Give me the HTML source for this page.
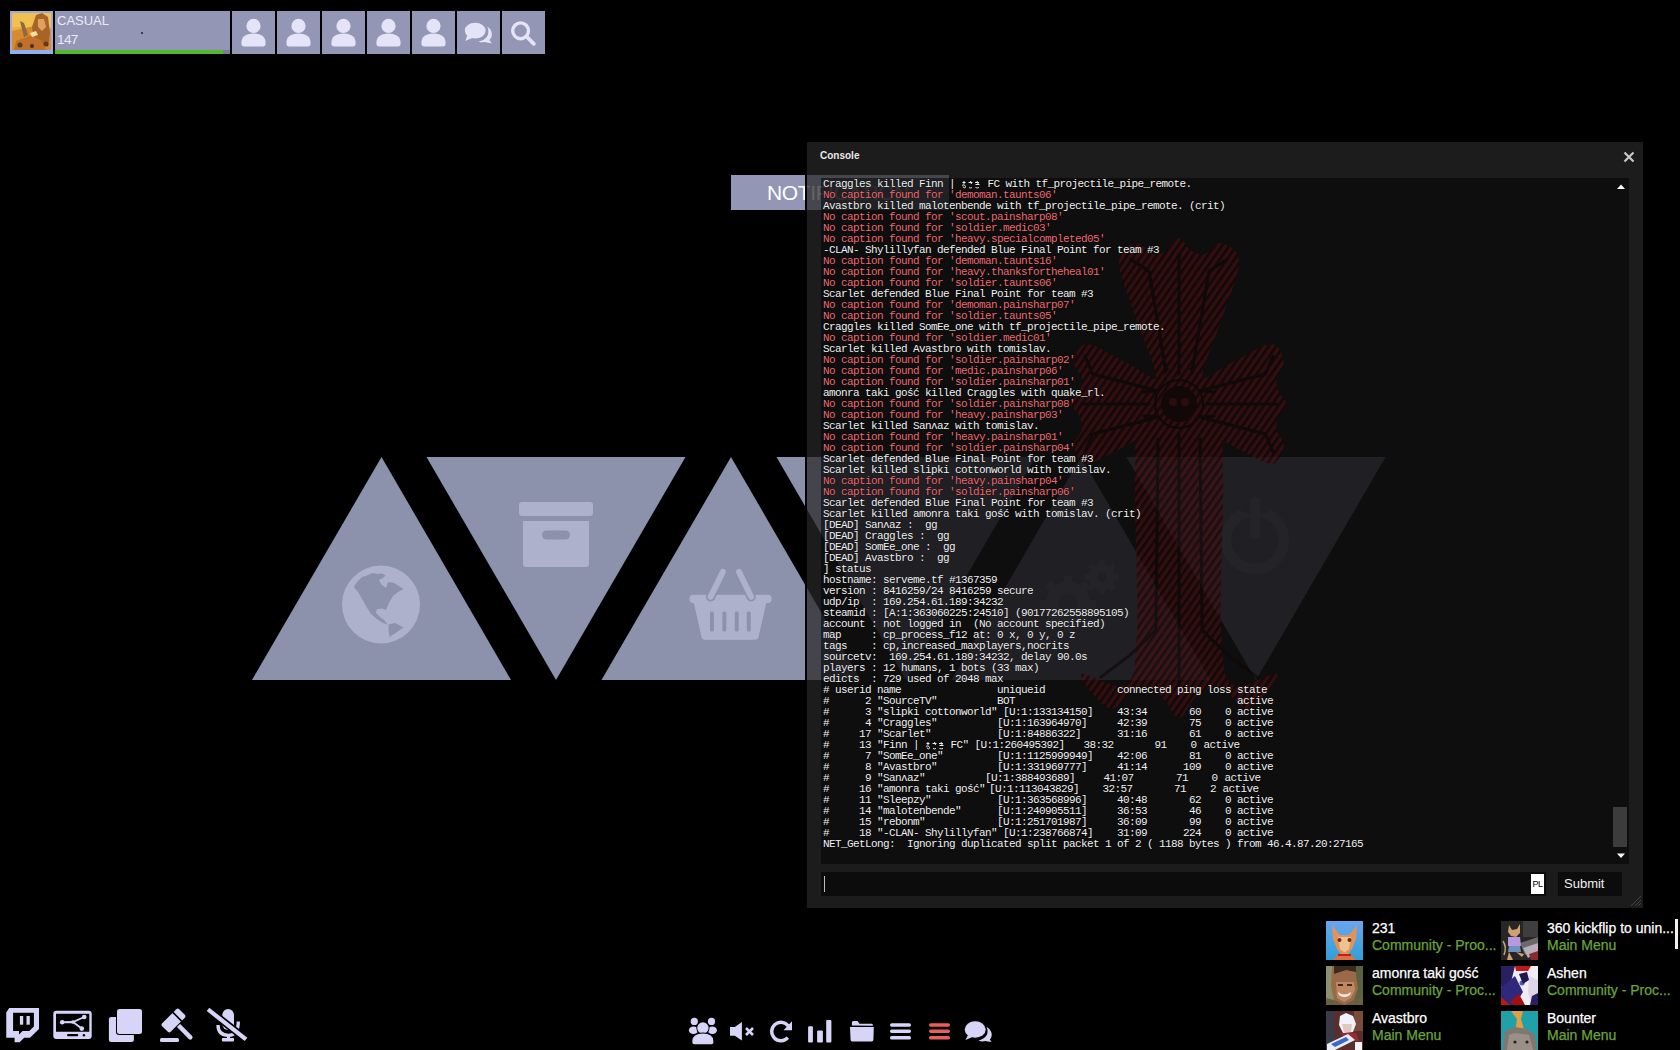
<!DOCTYPE html>
<html><head><meta charset="utf-8">
<style>
*{margin:0;padding:0;box-sizing:border-box}
html,body{width:1680px;height:1050px;overflow:hidden;background:#000;font-family:"Liberation Sans",sans-serif}
.abs{position:absolute}
.tb{position:absolute;top:11px;width:43px;height:43px;background:#9396b4}
.tb svg{position:absolute;left:0;top:0}
#console{position:absolute;left:805px;top:140px;width:840px;height:770px;border:2px solid #000;background:rgba(39,39,39,0.72)}
#txt{position:absolute;left:14px;top:36px;width:808px;height:686px;background:rgba(3,3,3,0.55);overflow:hidden}
#lines{position:absolute;left:2px;top:1px;font-family:"Liberation Mono",monospace;font-size:11px;letter-spacing:-0.6px;line-height:11px;color:#f0f0f0;text-shadow:0 0 1px #000}
#lines div{height:11px;position:relative;white-space:pre}
#lines .r{color:#ee6a72}
#lines .a{position:absolute;top:0}
.jp{display:inline-block;width:20px;height:11px;vertical-align:top}
.jp svg{display:block}
.fn{font-size:14px;line-height:17px;color:#fff;white-space:nowrap;-webkit-text-stroke:0.25px #fff}
.fs{font-size:14px;line-height:17px;color:#6aa43a;white-space:nowrap;-webkit-text-stroke:0.25px #6aa43a}
.av1{background:linear-gradient(180deg,#5aa8e0,#3d8ad0)}
.av2{background:linear-gradient(135deg,#3a3a3a,#8a7a70 50%,#b0a0c0)}
.av3{background:linear-gradient(135deg,#6a5a40,#c09070 50%,#4a4a3a)}
.av4{background:linear-gradient(135deg,#e8e8f0,#2a2a6a 40%,#c02020 80%)}
.av5{background:linear-gradient(135deg,#5a3a3a,#d0d0e0 50%,#4060a0)}
.av6{background:linear-gradient(180deg,#20a0a0,#706860 60%,#8a8078)}
</style></head><body>
<!-- top bar -->
<div class="abs" style="left:10px;top:11px;width:43px;height:43px;background:#a4a8d4"></div>
<div class="abs" style="left:10px;top:50px;width:43px;height:4px;background:#8cb0f0"></div>
<svg class="abs" style="left:12px;top:13px" width="39" height="37"><rect width="39" height="37" fill="#e8b040"/><rect y="0" width="39" height="14" fill="#f0c050"/><path d="M0 18L14 15L26 12L39 16V37H0Z" fill="#d88a30"/><path d="M24 2L30 0L36 4L38 20L36 34L28 30L22 26L20 14Z" fill="#a86428"/><path d="M26 6L32 6L34 14L30 18L26 14Z" fill="#e0a060"/><path d="M4 28L20 22L30 28L34 37H2Z" fill="#c07028"/><path d="M8 8L12 10L16 22L12 24Z" fill="#8a6a40"/><circle cx="8" cy="32" r="2.5" fill="#5a3a20"/><circle cx="20" cy="33" r="2" fill="#4a2a18"/><circle cx="34" cy="31" r="2.5" fill="#5a3a20"/><path d="M18 20L24 18L26 22L20 24Z" fill="#f8e0a0"/></svg>
<div class="abs" style="left:55px;top:11px;width:175px;height:43px;background:#9396b4"></div>
<div class="abs" style="left:55px;top:50px;width:168px;height:4px;background:#52b82e"></div>
<div class="abs" style="left:223px;top:50px;width:7px;height:4px;background:#7a7d98"></div>
<div class="abs" style="left:57px;top:12px;font-size:13px;line-height:18px;color:#eceaf8">CASUAL</div>
<div class="abs" style="left:57px;top:31px;font-size:13.5px;line-height:18px;color:#eceaf8;letter-spacing:-0.6px">147</div>
<div class="abs" style="left:141px;top:32px;width:2px;height:2px;background:#3a3a50"></div>
<div class="tb" style="left:232px"><svg width="43" height="43"><circle cx="21.5" cy="14.9" r="7.1" fill="#e5e3f7"/><path d="M9.4 32C9.4 26 13.5 22.6 21.5 22.6S33.6 26 33.6 32V33Q33.6 35.4 31.2 35.4H11.8Q9.4 35.4 9.4 33Z" fill="#e5e3f7"/></svg></div>
<div class="tb" style="left:277px"><svg width="43" height="43"><circle cx="21.5" cy="14.9" r="7.1" fill="#e5e3f7"/><path d="M9.4 32C9.4 26 13.5 22.6 21.5 22.6S33.6 26 33.6 32V33Q33.6 35.4 31.2 35.4H11.8Q9.4 35.4 9.4 33Z" fill="#e5e3f7"/></svg></div>
<div class="tb" style="left:322px"><svg width="43" height="43"><circle cx="21.5" cy="14.9" r="7.1" fill="#e5e3f7"/><path d="M9.4 32C9.4 26 13.5 22.6 21.5 22.6S33.6 26 33.6 32V33Q33.6 35.4 31.2 35.4H11.8Q9.4 35.4 9.4 33Z" fill="#e5e3f7"/></svg></div>
<div class="tb" style="left:367px"><svg width="43" height="43"><circle cx="21.5" cy="14.9" r="7.1" fill="#e5e3f7"/><path d="M9.4 32C9.4 26 13.5 22.6 21.5 22.6S33.6 26 33.6 32V33Q33.6 35.4 31.2 35.4H11.8Q9.4 35.4 9.4 33Z" fill="#e5e3f7"/></svg></div>
<div class="tb" style="left:412px"><svg width="43" height="43"><circle cx="21.5" cy="14.9" r="7.1" fill="#e5e3f7"/><path d="M9.4 32C9.4 26 13.5 22.6 21.5 22.6S33.6 26 33.6 32V33Q33.6 35.4 31.2 35.4H11.8Q9.4 35.4 9.4 33Z" fill="#e5e3f7"/></svg></div>
<div class="tb" style="left:457px"><svg width="43" height="43"><ellipse cx="18.2" cy="19.6" rx="10.4" ry="7.9" fill="#e5e3f7"/><path d="M10.5 23.5L8.3 30L16.5 26.5Z" fill="#e5e3f7"/><path d="M30.2 15.5C33.8 17.8 35.6 21.5 34.6 25.2C34.2 26.8 33.3 28 32.4 29L34.8 32.6L27.5 31C25.5 31.6 23.2 31.4 21.5 30.4C26.5 29.8 30.6 26.5 31.3 22.2C31.6 19.8 31.2 17.5 30.2 15.5Z" fill="#e5e3f7"/></svg></div>
<div class="tb" style="left:502px"><svg width="43" height="43"><circle cx="18.6" cy="19.8" r="7.9" fill="none" stroke="#e5e3f7" stroke-width="3.4"/><path d="M24.5 25.5L31.8 32.8" stroke="#e5e3f7" stroke-width="3.8" stroke-linecap="round"/></svg></div>

<!-- triangles -->
<svg class="abs" style="left:0;top:0" width="1680" height="1050">
<g fill="#8c91ac">
<polygon points="381.5,457 252,680 511,680"/>
<polygon points="426.5,457 685.5,457 556,680"/>
<polygon points="731,457 601.5,680 860.5,680"/>
<polygon points="776.5,457 1035.5,457 906,680"/>
<polygon points="1081,457 951.5,680 1210.5,680"/>
<polygon points="1126.5,457 1385.5,457 1256,680"/>
</g>
<g fill="#aeb1cc">
<circle cx="381" cy="604.5" r="39"/>
<rect x="519" y="502" width="74" height="14" rx="3"/>
<path d="M523 521H589V564Q589 567 586 567H526Q523 567 523 564Z"/>
<rect x="689.4" y="594.7" width="82.3" height="8.3" rx="4"/>
<path d="M693.7 602H766.5L758.5 637Q758 639.7 755 639.7H705Q702 639.7 701.5 637Z"/>
</g>
<g fill="#8c91ac">
<path d="M353.8 587L357 582L362 577L367 575.5L370 574L374 573L377 574L382 573.5L385.5 575.5L383 578L379 580L381 584L386 588L388 582L394 583L399 586L403.5 589L398 592L393 596L390 601L387.5 606L386 610L382 608.5L377 609L376 613L380 617L384 620L387.5 624.5L383 623L377 619L371 614L366 606L361.5 598L358 592Z"/>
<path d="M388.5 624.5L395 623L403.5 627.5L397 632L389.5 637L388.5 630Z"/>
<rect x="542" y="530.5" width="28" height="9" rx="4.5"/>
<rect x="710" y="611.4" width="3.9" height="20.1" rx="1.5"/>
<rect x="722.4" y="611.4" width="3.9" height="20.1" rx="1.5"/>
<rect x="734.8" y="611.4" width="3.9" height="20.1" rx="1.5"/>
<rect x="746.8" y="611.4" width="3.9" height="20.1" rx="1.5"/>
</g>
<path d="M710.6 596.8L722.8 572M751.1 596.8L739.1 572" stroke="#8c91ac" stroke-width="9.5" stroke-linecap="round"/><path d="M710.6 596.8L722.8 572M751.1 596.8L739.1 572" stroke="#aeb1cc" stroke-width="6" stroke-linecap="round"/>
<g fill="none" stroke="#aeb1cc">
<circle cx="1255" cy="540" r="29" stroke-width="10"/>
</g>
<path d="M1243 505A34 34 0 0 0 1267 505" stroke="#8c91ac" stroke-width="14" fill="none"/>
<rect x="1250" y="497" width="10" height="42" rx="5" fill="#aeb1cc"/>
<g><circle cx="1068" cy="604" r="22" fill="#aeb1cc"/><rect x="1064.0" y="576" width="8" height="7" fill="#aeb1cc" transform="rotate(0.0 1068 604)"/><rect x="1064.0" y="576" width="8" height="7" fill="#aeb1cc" transform="rotate(45.0 1068 604)"/><rect x="1064.0" y="576" width="8" height="7" fill="#aeb1cc" transform="rotate(90.0 1068 604)"/><rect x="1064.0" y="576" width="8" height="7" fill="#aeb1cc" transform="rotate(135.0 1068 604)"/><rect x="1064.0" y="576" width="8" height="7" fill="#aeb1cc" transform="rotate(180.0 1068 604)"/><rect x="1064.0" y="576" width="8" height="7" fill="#aeb1cc" transform="rotate(225.0 1068 604)"/><rect x="1064.0" y="576" width="8" height="7" fill="#aeb1cc" transform="rotate(270.0 1068 604)"/><rect x="1064.0" y="576" width="8" height="7" fill="#aeb1cc" transform="rotate(315.0 1068 604)"/><circle cx="1068" cy="604" r="10" fill="#8c91ac"/><circle cx="1102" cy="577" r="13" fill="#aeb1cc"/><rect x="1099.5" y="560" width="5" height="5" fill="#aeb1cc" transform="rotate(0.0 1102 577)"/><rect x="1099.5" y="560" width="5" height="5" fill="#aeb1cc" transform="rotate(45.0 1102 577)"/><rect x="1099.5" y="560" width="5" height="5" fill="#aeb1cc" transform="rotate(90.0 1102 577)"/><rect x="1099.5" y="560" width="5" height="5" fill="#aeb1cc" transform="rotate(135.0 1102 577)"/><rect x="1099.5" y="560" width="5" height="5" fill="#aeb1cc" transform="rotate(180.0 1102 577)"/><rect x="1099.5" y="560" width="5" height="5" fill="#aeb1cc" transform="rotate(225.0 1102 577)"/><rect x="1099.5" y="560" width="5" height="5" fill="#aeb1cc" transform="rotate(270.0 1102 577)"/><rect x="1099.5" y="560" width="5" height="5" fill="#aeb1cc" transform="rotate(315.0 1102 577)"/><circle cx="1102" cy="577" r="5" fill="#8c91ac"/></g>

</svg>
<!-- notification -->
<div class="abs" style="left:731px;top:175px;width:218px;height:35px;background:#9396b4;color:#fff;font-size:21px;line-height:35px;letter-spacing:-0.4px;text-align:center;padding-right:4px">NOTIFICATION</div>

<!-- console -->
<div id="console">
 <div class="abs" style="left:13px;top:8px;font-size:10px;font-weight:bold;color:#e8e8e8">Console</div>
 <svg class="abs" style="left:816px;top:9px" width="12" height="12"><path d="M1.5 1.5L10.5 10.5M10.5 1.5L1.5 10.5" stroke="#c8c8c8" stroke-width="2.2"/></svg>
 <div class="abs" style="left:14px;top:730px;width:725px;height:24px;background:rgba(0,0,0,0.55)"></div>
 <div class="abs" style="left:17px;top:734px;width:1px;height:16px;background:#bdbdbd"></div>
 <div class="abs" style="left:724px;top:732px;width:13px;height:20px;background:#fff;color:#000;font-size:9px;line-height:20px;font-family:'Liberation Sans',sans-serif;letter-spacing:-0.5px;text-align:center">PL</div>
 <div class="abs" style="left:751px;top:730px;width:64px;height:24px;background:rgba(0,0,0,0.55);color:#eee;font-size:13px;line-height:24px;padding-left:6px">Submit</div>
 <svg class="abs" style="left:822px;top:752px" width="14" height="14"><path d="M12 2L2 12M12 6L6 12M12 9L9 12" stroke="#444" stroke-width="1"/></svg>
 <div id="txt">
  <svg id="cross" class="abs" style="left:0;top:0;opacity:0.62" width="808" height="686"><defs><pattern id="hatch" width="6" height="6" patternUnits="userSpaceOnUse" patternTransform="rotate(35)"><rect width="6" height="6" fill="#4a0e12"/><rect width="2.6" height="6" fill="#140606"/></pattern></defs><g fill="url(#hatch)"><path d="M336.4 226.0C328.8 220.5 337.9 208.0 334.0 192.8C330.1 177.6 319.0 153.0 313.0 134.7C307.0 116.4 297.5 94.9 298.0 83.2C298.5 71.6 310.2 66.1 316.0 65.0C321.8 63.9 327.6 75.5 332.8 76.6C338.0 77.7 343.0 74.4 347.2 71.6C351.4 68.9 354.4 60.0 358.0 60.0C361.6 60.0 364.6 68.9 368.8 71.6C373.0 74.4 378.0 77.7 383.2 76.6C388.4 75.5 394.2 63.9 400.0 65.0C405.8 66.1 417.5 71.6 418.0 83.2C418.5 94.9 409.0 116.4 403.0 134.7C397.0 153.0 385.9 177.6 382.0 192.8C378.1 208.0 387.2 220.5 379.6 226.0C372.0 231.5 344.0 231.5 336.4 226.0Z"/><path d="M358.0 247.6C354.4 255.2 346.3 246.1 336.4 250.0C326.5 253.9 310.5 265.0 298.6 271.0C286.7 277.0 272.7 286.5 265.1 286.0C257.6 285.5 254.0 273.8 253.2 268.0C252.5 262.2 260.1 256.4 260.8 251.2C261.5 246.0 259.4 241.0 257.6 236.8C255.8 232.6 250.0 229.6 250.0 226.0C250.0 222.4 255.8 219.4 257.6 215.2C259.4 211.0 261.5 206.0 260.8 200.8C260.1 195.6 252.5 189.8 253.2 184.0C254.0 178.2 257.6 166.5 265.1 166.0C272.7 165.5 286.7 175.0 298.6 181.0C310.5 187.0 326.5 198.1 336.4 202.0C346.3 205.9 354.4 196.8 358.0 204.4C361.6 212.0 361.6 240.0 358.0 247.6Z"/><path d="M358.0 204.4C361.6 196.8 369.7 205.9 379.6 202.0C389.5 198.1 405.5 187.0 417.4 181.0C429.3 175.0 443.3 165.5 450.9 166.0C458.4 166.5 462.0 178.2 462.8 184.0C463.5 189.8 455.9 195.6 455.2 200.8C454.5 206.0 456.6 211.0 458.4 215.2C460.2 219.4 466.0 222.4 466.0 226.0C466.0 229.6 460.2 232.6 458.4 236.8C456.6 241.0 454.5 246.0 455.2 251.2C455.9 256.4 463.5 262.2 462.8 268.0C462.0 273.8 458.4 285.5 450.9 286.0C443.3 286.5 429.3 277.0 417.4 271.0C405.5 265.0 389.5 253.9 379.6 250.0C369.7 246.1 361.6 255.2 358.0 247.6C354.4 240.0 354.4 212.0 358.0 204.4Z"/><path d="M395.8 226.0C409.1 263.7 397.3 405.3 400.0 452.1C402.7 498.8 402.6 499.3 411.9 506.6C421.2 513.9 453.6 492.0 456.0 496.0C458.5 500.0 436.1 528.5 426.6 530.6C417.1 532.7 407.7 510.7 399.2 508.6C390.7 506.5 382.5 512.8 375.6 518.0C368.8 523.3 363.9 540.0 358.0 540.0C352.1 540.0 347.2 523.3 340.4 518.0C333.5 512.8 325.3 506.5 316.8 508.6C308.3 510.7 298.9 532.7 289.4 530.6C279.9 528.5 257.6 500.0 260.0 496.0C262.5 492.0 294.8 513.9 304.1 506.6C313.4 499.3 313.3 498.8 316.0 452.1C318.7 405.3 306.9 263.7 320.2 226.0C333.5 188.3 382.5 188.3 395.8 226.0Z"/><circle cx="358" cy="226" r="30"/></g><path d="M358.0 196.0L358.0 76.6M346.0 191.0L344.8 192.8L328.0 93.2L310.0 81.6M370.0 191.0L371.2 192.8L388.0 93.2L406.0 81.6M328.0 226.0L260.8 226.0M323.0 238.0L336.4 239.2L271.6 256.0L264.0 274.0M323.0 214.0L336.4 212.8L271.6 196.0L264.0 178.0M388.0 226.0L455.2 226.0M393.0 214.0L379.6 212.8L444.4 196.0L452.0 178.0M393.0 238.0L379.6 239.2L444.4 256.0L452.0 274.0M358.0 256.0L358.0 508.6M379.0 261.0L381.1 452.1L407.0 477.2L436.4 499.2M337.0 261.0L334.9 452.1L309.0 477.2L279.6 499.2" stroke="#100606" stroke-width="3" fill="none" stroke-linecap="round"/><circle cx="358" cy="226" r="18" fill="#160505"/><circle cx="358" cy="226" r="24" fill="none" stroke="#120404" stroke-width="2"/><circle cx="352" cy="224" r="4" fill="#3c0d10"/><circle cx="364" cy="224" r="4" fill="#3c0d10"/></svg>
  <svg class="abs" style="left:796px;top:6px" width="8" height="6"><path d="M0 5L4 0.5L8 5Z" fill="#fff"/></svg>
  <svg class="abs" style="left:796px;top:675px" width="8" height="6"><path d="M0 0.5L4 5L8 0.5Z" fill="#fff"/></svg>
  <div class="abs" style="left:792px;top:629px;width:14px;height:40px;background:#3c3c3c"></div>
  <div id="lines">
<div>Craggles killed Finn | <span class="jp"><svg width="20" height="11"><path d="M1.5 3.5h3M3 2v3M1 6.5c1-1 3-1 3.5 1s-2.5 1.5-2.5 0M7.5 3.5h4M9.5 2l1 3M8 8.5c1 .5 2 .5 3 0M14 3.5h4M14.5 5.5h4M16 2l1.5 4M14.5 8.5c1 .5 2.5.5 3.5 0" stroke="#ececec" fill="none" stroke-width="1"/></svg></span><span style="position:absolute;left:158.5px"> FC with tf_projectile_pipe_remote.</span></div>
<div class="r">No caption found for 'demoman.taunts06'</div>
<div>Avastbro killed malotenbende with tf_projectile_pipe_remote. (crit)</div>
<div class="r">No caption found for 'scout.painsharp08'</div>
<div class="r">No caption found for 'soldier.medic03'</div>
<div class="r">No caption found for 'heavy.specialcompleted05'</div>
<div>-CLAN- Shylillyfan defended Blue Final Point for team #3</div>
<div class="r">No caption found for 'demoman.taunts16'</div>
<div class="r">No caption found for 'heavy.thanksfortheheal01'</div>
<div class="r">No caption found for 'soldier.taunts06'</div>
<div>Scarlet defended Blue Final Point for team #3</div>
<div class="r">No caption found for 'demoman.painsharp07'</div>
<div class="r">No caption found for 'soldier.taunts05'</div>
<div>Craggles killed SomEe_one with tf_projectile_pipe_remote.</div>
<div class="r">No caption found for 'soldier.medic01'</div>
<div>Scarlet killed Avastbro with tomislav.</div>
<div class="r">No caption found for 'soldier.painsharp02'</div>
<div class="r">No caption found for 'medic.painsharp06'</div>
<div class="r">No caption found for 'soldier.painsharp01'</div>
<div>amonra taki gość killed Craggles with quake_rl.</div>
<div class="r">No caption found for 'soldier.painsharp08'</div>
<div class="r">No caption found for 'heavy.painsharp03'</div>
<div>Scarlet killed Sanʌaz with tomislav.</div>
<div class="r">No caption found for 'heavy.painsharp01'</div>
<div class="r">No caption found for 'soldier.painsharp04'</div>
<div>Scarlet defended Blue Final Point for team #3</div>
<div>Scarlet killed slipki cottonworld with tomislav.</div>
<div class="r">No caption found for 'heavy.painsharp04'</div>
<div class="r">No caption found for 'soldier.painsharp06'</div>
<div>Scarlet defended Blue Final Point for team #3</div>
<div>Scarlet killed amonra taki gość with tomislav. (crit)</div>
<div>[DEAD] Sanʌaz :  gg</div>
<div>[DEAD] Craggles :  gg</div>
<div>[DEAD] SomEe_one :  gg</div>
<div>[DEAD] Avastbro :  gg</div>
<div>] status</div>
<div>hostname: serveme.tf #1367359</div>
<div>version : 8416259/24 8416259 secure</div>
<div>udp/ip  : 169.254.61.189:34232</div>
<div>steamid : [A:1:363060225:24510] (90177262558895105)</div>
<div>account : not logged in  (No account specified)</div>
<div>map     : cp_process_f12 at: 0 x, 0 y, 0 z</div>
<div>tags    : cp,increased_maxplayers,nocrits</div>
<div>sourcetv:  169.254.61.189:34232, delay 90.0s</div>
<div>players : 12 humans, 1 bots (33 max)</div>
<div>edicts  : 729 used of 2048 max</div>
<div># userid name                uniqueid            connected ping loss state</div>
<div>#      2 "SourceTV"          BOT                                     active</div>
<div>#      3 "slipki cottonworld" [U:1:133134150]    43:34       60    0 active</div>
<div>#      4 "Craggles"          [U:1:163964970]     42:39       75    0 active</div>
<div>#     17 "Scarlet"           [U:1:84886322]      31:16       61    0 active</div>
<div>#     13 "Finn | <span class="a" style="left:102px;top:0"><svg width="20" height="11"><path d="M1.5 3.5h3M3 2v3M1 6.5c1-1 3-1 3.5 1s-2.5 1.5-2.5 0M7.5 3.5h4M9.5 2l1 3M8 8.5c1 .5 2 .5 3 0M14 3.5h4M14.5 5.5h4M16 2l1.5 4M14.5 8.5c1 .5 2.5.5 3.5 0" stroke="#ececec" fill="none" stroke-width="1"/></svg></span><span class="a" style="left:127.5px">FC" [U:1:260495392]</span><span class="a" style="left:260.5px">38:32</span><span class="a" style="left:331.5px">91</span><span class="a" style="left:367.5px">0</span><span class="a" style="left:380.5px">active</span></div>
<div>#      7 "SomEe_one"         [U:1:1125999949]    42:06       81    0 active</div>
<div>#      8 "Avastbro"          [U:1:331969777]     41:14      109    0 active</div>
<div>#      9 "Sanʌaz"<span class="a" style="left:162px">[U:1:388493689]</span><span class="a" style="left:280.5px">41:07</span><span class="a" style="left:353px">71</span><span class="a" style="left:388.5px">0</span><span class="a" style="left:401.5px">active</span></div>
<div>#     16 "amonra taki gość"<span class="a" style="left:166px">[U:1:113043829]</span><span class="a" style="left:279.5px">32:57</span><span class="a" style="left:351px">71</span><span class="a" style="left:387px">2</span><span class="a" style="left:399.5px">active</span></div>
<div>#     11 "Sleepzy"           [U:1:363568996]     40:48       62    0 active</div>
<div>#     14 "malotenbende"      [U:1:240905511]     36:53       46    0 active</div>
<div>#     15 "rebonm"            [U:1:251701987]     36:09       99    0 active</div>
<div>#     18 "-CLAN- Shylillyfan" [U:1:238766874]    31:09      224    0 active</div>
<div>NET_GetLong:  Ignoring duplicated split packet 1 of 2 ( 1188 bytes ) from 46.4.87.20:27165</div>
</div>
 </div>
</div>

<!-- bottom left icons -->
<svg class="abs" style="left:0;top:995px" width="260" height="55">
<g transform="translate(0,-995)" fill="#d7d5f7">
<path fill-rule="evenodd" d="M9.2 1008H39V1029L30 1037.8H24.2L19.6 1042.3H14.6V1037.8H6.25V1012.5ZM13.1 1012.8V1031H19V1034.5L22.5 1031H29.2L33.9 1026.5V1012.8Z"/>
<rect x="19.9" y="1016" width="3.3" height="8.7"/><rect x="26.5" y="1016" width="3.3" height="8.7"/>
<path fill-rule="evenodd" d="M56.3 1010.7H88.7Q91.7 1010.7 91.7 1013.7V1036Q91.7 1039 88.7 1039H56.3Q53.3 1039 53.3 1036V1013.7Q53.3 1010.7 56.3 1010.7ZM56 1013.7V1031.8H89.3V1013.7Z"/>
<path d="M62.2 1022.3L72.9 1022L84.2 1017M72.9 1022L81.8 1028.6" stroke="#d7d5f7" stroke-width="1.9" fill="none"/>
<circle cx="62.2" cy="1022.3" r="2.3"/><circle cx="72.9" cy="1022" r="1.8"/><circle cx="84.2" cy="1017" r="2.3"/><circle cx="81.8" cy="1028.6" r="2.3"/>
<rect x="67" y="1033.9" width="11.3" height="2.4" rx="1.2" fill="#000"/><circle cx="83.9" cy="1035.2" r="1.2" fill="#000"/>
<rect x="108.9" y="1017" width="25" height="25" rx="2.5"/>
<rect x="116" y="1008" width="27" height="27" rx="3" fill="#000"/>
<rect x="117" y="1008.9" width="25" height="25" rx="2.5"/>
<g transform="rotate(-45 173.5 1020.5)">
<rect x="171.3" y="1024" width="4.5" height="22.5" rx="2.2"/>
<rect x="160.5" y="1013.5" width="26" height="14" rx="1" fill="#000"/>
<rect x="161.5" y="1014.5" width="24" height="12" rx="2"/>
<rect x="178" y="1014" width="1.6" height="13" fill="#000"/>
</g>
<rect x="160" y="1038" width="19" height="4" rx="1.5"/>
<rect x="222.3" y="1009" width="11.7" height="21" rx="5.8"/>
<path d="M218 1025Q218 1035.3 228.4 1035.3Q238.3 1035.3 238.3 1021.5" stroke="#d7d5f7" stroke-width="3.3" fill="none"/>
<rect x="227" y="1035" width="3" height="4"/>
<rect x="221.9" y="1038" width="12.1" height="3.5" rx="1"/>
<path d="M208 1009.4L246 1039.3" stroke="#000" stroke-width="7.5"/>
<path d="M208 1009.4L246 1039.3" stroke="#d7d5f7" stroke-width="4.2"/>
</g>
</svg>
<!-- bottom center icons -->
<svg class="abs" style="left:680px;top:1005px" width="320" height="45">
<g transform="translate(-680,-1005)" fill="#d7d5f7">
<circle cx="694.3" cy="1021.4" r="3.6"/><circle cx="711.5" cy="1021.4" r="3.6"/>
<ellipse cx="693.5" cy="1030.3" rx="4.6" ry="3.8"/><ellipse cx="712.3" cy="1030.3" rx="4.6" ry="3.8"/>
<circle cx="702.9" cy="1028" r="6.6" fill="#000"/>
<circle cx="702.9" cy="1028" r="5.7"/>
<path d="M691.5 1044.5V1041Q691.5 1032.5 702.9 1032.5Q714.3 1032.5 714.3 1041V1044.5Z" fill="#000"/>
<path d="M692.4 1042.5V1041Q692.4 1033.5 702.9 1033.5Q713.3 1033.5 713.3 1041V1042.5Q713.3 1044.3 711.5 1044.3H694.2Q692.4 1044.3 692.4 1042.5Z"/>
<path d="M730 1027.1H734.8L741.9 1021.9V1040.5L734.8 1035.7H730Z"/>
<path d="M746 1028L753 1035M753 1028L746 1035" stroke="#d7d5f7" stroke-width="2.6"/>
<path d="M788.3 1026A9.2 9.2 0 1 0 787.8 1037.6" stroke="#d7d5f7" stroke-width="3.4" fill="none"/>
<path d="M783.5 1030.2H792V1021.2Z"/>
<rect x="808.1" y="1026.2" width="4.8" height="16.2" rx="1"/>
<rect x="817.1" y="1030.5" width="5.8" height="11.9" rx="1"/>
<rect x="826.2" y="1020" width="5.2" height="22.4" rx="1"/>
<path d="M851.9 1025.5V1022.5Q851.9 1021 853.4 1021H857.5L859.5 1023.8H871.5Q872.9 1023.8 872.9 1025.2V1025.7Z"/>
<path d="M850 1027.1H873.8L873.4 1040Q873.3 1041.4 871.9 1041.4H852.1Q850.7 1041.4 850.6 1040Z"/>
<rect x="890" y="1023.3" width="21" height="3.5" rx="1.7"/><rect x="890" y="1029.5" width="21" height="3.5" rx="1.7"/><rect x="890" y="1036.1" width="21" height="3.5" rx="1.7"/>
<g fill="#eb5f5a"><rect x="929" y="1023.3" width="21" height="3.5" rx="1.7"/><rect x="929" y="1029.5" width="21" height="3.5" rx="1.7"/><rect x="929" y="1036.1" width="21" height="3.5" rx="1.7"/></g>
<path d="M986.5 1027C990.5 1029 992.5 1033 991.5 1036.5C991.2 1037.8 990.5 1038.8 989.8 1039.5L991.5 1042L985 1041C983 1041.7 980.5 1041.6 978.5 1040.5C983.5 1039.5 986.8 1036.5 987.5 1032.8C987.8 1030.8 987.5 1028.8 986.5 1027Z"/>
<ellipse cx="975.2" cy="1029.5" rx="11.3" ry="9.1" fill="#000"/>
<ellipse cx="975.2" cy="1029.5" rx="10.5" ry="8.3"/>
<path d="M968 1035L965.5 1040L972.5 1037Z"/>
</g>
</svg>
<!-- friends -->
<div class="abs" style="left:1675px;top:919px;width:2.5px;height:30px;background:#f0f0f0"></div>
<div class="abs av1" style="left:1326px;top:921px;width:37px;height:39px"><svg width="37" height="39"><defs><linearGradient id="g1" x1="0" y1="0" x2="0" y2="1"><stop offset="0" stop-color="#6aa6f0"/><stop offset="1" stop-color="#2fa0d8"/></linearGradient></defs><rect width="37" height="39" fill="url(#g1)"/><path d="M6 4L14 14L23 14L31 4L30 18L26 28L22 33H15L11 28L7 18Z" fill="#e0945a"/><path d="M12 16L25 16L23 28L19 31H18L14 28Z" fill="#f0c090"/><circle cx="13.5" cy="19" r="2" fill="#6a2a20"/><circle cx="23.5" cy="19" r="2" fill="#6a2a20"/><path d="M11 34H26L30 39H7Z" fill="#e07040"/><rect x="12" y="33" width="13" height="2" fill="#c02020"/></svg></div>
<div class="abs fn" style="left:1372px;top:920px">231</div>
<div class="abs fs" style="left:1372px;top:937px">Community - Proo...</div>
<div class="abs av2" style="left:1501px;top:921px;width:37px;height:39px"><svg width="37" height="39"><rect width="37" height="39" fill="#262626"/><rect x="22" y="0" width="15" height="16" fill="#3e3e3e"/><path d="M19 22L37 16V27L24 34Z" fill="#6a6a6a"/><path d="M22 27L37 22V31L27 37Z" fill="#b8b0b8"/><path d="M28 33L37 30V39H30Z" fill="#8a2a30"/><path d="M8 4L11 9L16 8L19 3L19 12L15 16L10 15L7 11Z" fill="#d0a070"/><path d="M7 16H19L20 25H7Z" fill="#b898e0"/><path d="M8 25H19L20 31H7Z" fill="#7090c0"/><path d="M8 31L12 39H6ZM15 31L21 36L23 33Z" fill="#d0a070"/><path d="M2 20Q6 26 3 34" stroke="#c8a070" stroke-width="1.5" fill="none"/></svg></div>
<div class="abs fn" style="left:1547px;top:920px">360 kickflip to unin...</div>
<div class="abs fs" style="left:1547px;top:937px">Main Menu</div>
<div class="abs av3" style="left:1326px;top:966px;width:37px;height:39px"><svg width="37" height="39"><rect width="37" height="39" fill="#5a6040"/><rect x="0" y="0" width="8" height="39" fill="#8a9070"/><path d="M6 0H30V10L32 22L28 34L18 39L8 34L5 20Z" fill="#9a6a48"/><path d="M8 0H30V6L20 4L8 8Z" fill="#3a2a20"/><path d="M10 16L28 16L29 24L25 32L18 36L11 32Z" fill="#c08860"/><path d="M12 26Q18 31 25 26L24 29Q18 33 13 29Z" fill="#f0f0e8"/><rect x="12" y="18" width="5" height="2" fill="#3a2a20"/><rect x="21" y="18" width="5" height="2" fill="#3a2a20"/><path d="M0 32L8 34L18 39H0ZM37 30L28 34L20 39H37Z" fill="#6a6040"/></svg></div>
<div class="abs fn" style="left:1372px;top:965px">amonra taki gość</div>
<div class="abs fs" style="left:1372px;top:982px">Community - Proc...</div>
<div class="abs av4" style="left:1501px;top:966px;width:37px;height:39px"><svg width="37" height="39"><rect width="37" height="39" fill="#f0ecf4"/><path d="M0 0H14L10 16L0 22Z" fill="#2a2060"/><path d="M14 0H30L27 5H15Z" fill="#c01818"/><path d="M0 22L14 10L22 26L14 39H0Z" fill="#30287a"/><path d="M0 31L9 39H0Z" fill="#c01818"/><path d="M9 36L18 28L24 39H12Z" fill="#a01010"/><path d="M28 10L37 14V39H31L27 26Z" fill="#ded6e6"/><circle cx="21" cy="17" r="2.5" fill="#5058b8"/><path d="M31 30L37 27V39H29Z" fill="#2a2060"/><path d="M18 8L26 6L28 14L22 18Z" fill="#1e1850"/></svg></div>
<div class="abs fn" style="left:1547px;top:965px">Ashen</div>
<div class="abs fs" style="left:1547px;top:982px">Community - Proc...</div>
<div class="abs av5" style="left:1326px;top:1011px;width:37px;height:39px"><svg width="37" height="39"><rect width="37" height="39" fill="#5a2e2e"/><rect x="0" y="0" width="8" height="39" fill="#3a3a48"/><rect x="28" y="0" width="9" height="20" fill="#7a4a3a"/><path d="M14 5L20 2L27 5L30 13L27 21L17 22L13 14Z" fill="#f2f2fa"/><path d="M16 13L26 13L25 21L18 21Z" fill="#e0c8c0"/><path d="M13 22L30 22L33 30L26 30Z" fill="#9a2a30"/><path d="M1 33L22 23L29 29L9 39H1Z" fill="#e8eef8"/><path d="M5 33L20 26L23 29L9 36Z" fill="#3a68c8"/><rect x="29" y="31" width="7" height="8" fill="#f4f4f4"/></svg></div>
<div class="abs fn" style="left:1372px;top:1010px">Avastbro</div>
<div class="abs fs" style="left:1372px;top:1027px">Main Menu</div>
<div class="abs av6" style="left:1501px;top:1011px;width:37px;height:39px"><svg width="37" height="39"><rect width="37" height="39" fill="#20a0a8"/><path d="M10 0H22L20 8L24 22H14L16 8Z" fill="#e0a040"/><path d="M4 20L14 16L26 18L34 24L36 39H2Z" fill="#807870"/><path d="M8 24L14 22L28 24L32 39H6Z" fill="#9a9088"/><circle cx="14" cy="31" r="1.6" fill="#2a2020"/><circle cx="26" cy="31" r="1.6" fill="#2a2020"/></svg></div>
<div class="abs fn" style="left:1547px;top:1010px">Bounter</div>
<div class="abs fs" style="left:1547px;top:1027px">Main Menu</div>
</body></html>
